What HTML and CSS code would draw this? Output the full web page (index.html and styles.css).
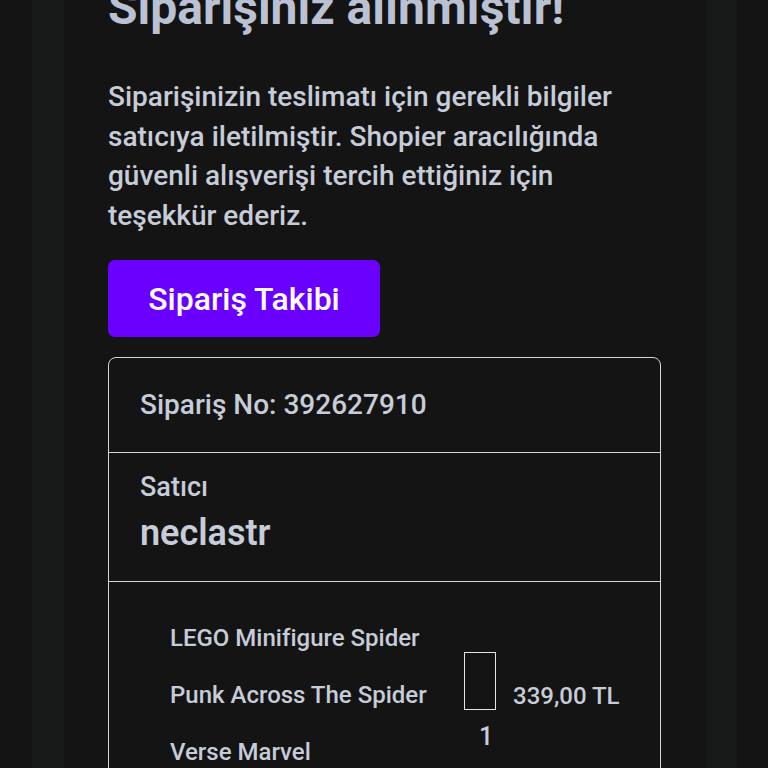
FILE: index.html
```html
<!DOCTYPE html>
<html lang="tr">
<head>
<meta charset="utf-8">
<title>Siparişiniz alınmıştır!</title>
<link rel="stylesheet" href="styles.css">
</head>
<body>
<main class="page">
  <h1 class="title">Siparişiniz alınmıştır!</h1>
  <p class="lead">Siparişinizin teslimatı için gerekli bilgiler satıcıya iletilmiştir. Shopier aracılığında güvenli alışverişi tercih ettiğiniz için teşekkür ederiz.</p>
  <a class="btn" href="#">Sipariş Takibi</a>
  <section class="card">
    <div class="row row-no">Sipariş No: 392627910</div>
    <div class="row row-seller">
      <div class="seller-label">Satıcı</div>
      <div class="seller-name">neclastr</div>
    </div>
    <div class="row row-item">
      <div class="item-name">LEGO Minifigure Spider Punk Across The Spider Verse Marvel</div>
      <div class="item-media">
        <div class="thumb"></div>
        <div class="qty">1</div>
      </div>
      <div class="price">339,00 TL</div>
    </div>
  </section>
</main>
</body>
</html>
```

FILE: styles.css
```css
html, body {
  margin: 0;
  padding: 0;
}
body {
  background-color: #141414;
  background-image: linear-gradient(to right,
    #141414 0, #141414 32px,
    #171818 32px, #171818 64px,
    #141414 64px, #141414 707px,
    #171818 707px, #171818 737px,
    #141414 737px);
  font-family: Roboto, "Noto Sans", sans-serif;
  color: #c6ccd8;
  height: 768px;
  overflow: hidden;
}
.page {
  width: 553px;
  margin-left: 108px;
}
.title {
  margin: -20px 0 0 0;
  font-size: 48px;
  line-height: 56px;
  font-weight: 700;
  color: #b9c1d3;
  white-space: nowrap;
}
.lead {
  margin: 41px 0 0 0;
  font-size: 28px;
  line-height: 39.5px;
  font-weight: 500;
  padding-right: 10px;
}
.btn {
  display: flex;
  align-items: center;
  justify-content: center;
  margin-top: 25px;
  width: 272px;
  height: 77px;
  background: #6a00ff;
  border-radius: 7px;
  color: #ffffff;
  font-size: 32px;
  font-weight: 500;
  text-decoration: none;
}
.card {
  margin-top: 20px;
  border: 1px solid #d4d6da;
  border-radius: 8px;
}
.row {
  padding: 0 31px;
}
.row + .row {
  border-top: 1px solid #d4d6da;
}
.row-no {
  padding-top: 30px;
  padding-bottom: 30px;
  font-size: 28px;
  font-weight: 500;
  line-height: 34px;
}
.row-seller {
  padding-top: 18px;
  padding-bottom: 26px;
}
.seller-label {
  font-size: 27px;
  font-weight: 500;
  line-height: 32px;
}
.seller-name {
  margin-top: 8px;
  font-size: 36px;
  line-height: 44px;
  font-weight: 600;
}
.row-item {
  display: flex;
  align-items: flex-start;
  padding: 28px 31px 0 61px;
}
.item-name {
  width: 280px;
  font-size: 24px;
  font-weight: 500;
  line-height: 57px;
}
.item-media {
  margin-left: 14px;
  margin-top: 42px;
  width: 32px;
}
.thumb {
  width: 30px;
  height: 56px;
  border: 1px solid #e6e6e6;
}
.qty {
  font-size: 25px;
  font-weight: 500;
  line-height: 32px;
  margin-top: 11px;
  padding-left: 15px;
}
.price {
  align-self: center;
  margin-left: 17px;
  font-size: 24px;
  font-weight: 500;
  line-height: 32px;
  white-space: nowrap;
}
```
